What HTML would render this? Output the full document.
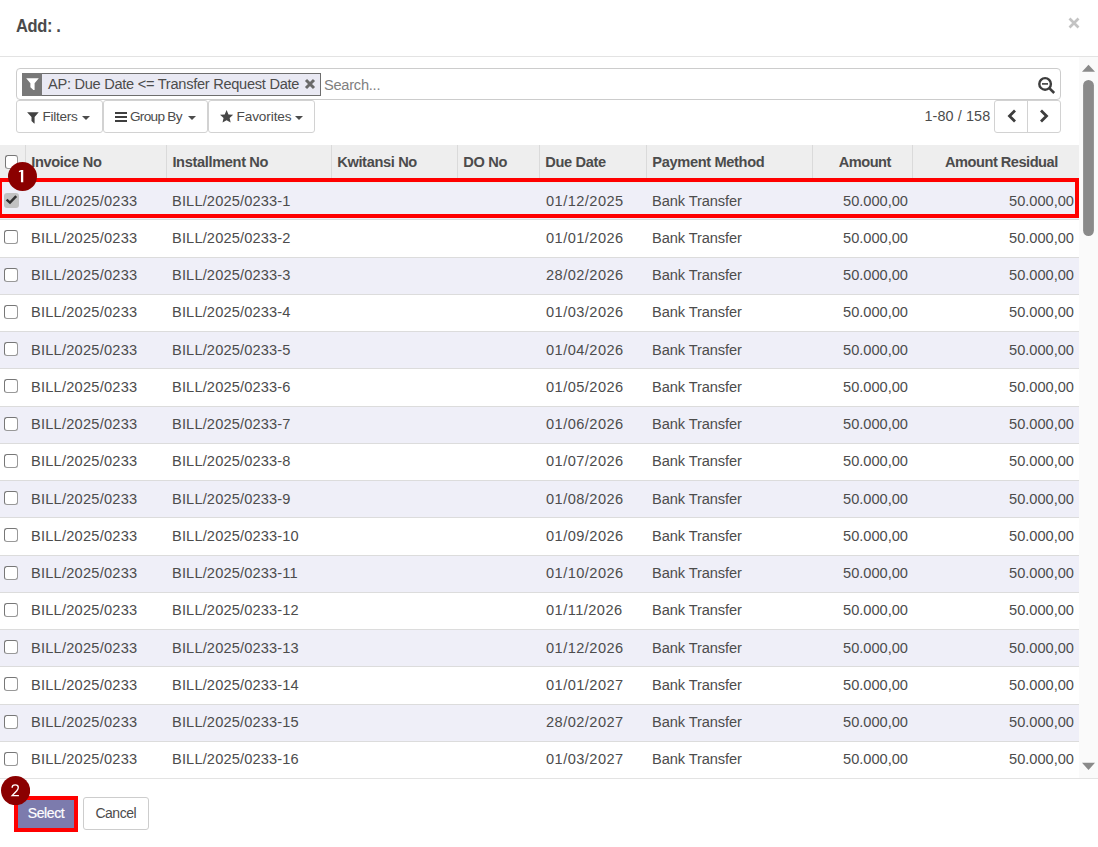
<!DOCTYPE html><html><head><meta charset="utf-8"><style>
*{box-sizing:border-box;margin:0;padding:0}
html,body{width:1098px;height:847px;overflow:hidden;background:#fff}
body{position:relative;font-family:"Liberation Sans",sans-serif;color:#4c4c4c}
.a{position:absolute;white-space:nowrap}
.t{font-size:14.625px;line-height:16px}
.hd{font-weight:bold}
.ln{position:absolute;left:0;height:1px;background:#dcdcdc}
.vl{position:absolute;width:1px;background:#dadada}
.cb{position:absolute;width:14px;height:14px;border:1px solid #777;border-right-color:#999;border-bottom-color:#999;border-radius:3px;background:#fff}
.btn{position:absolute;border:1px solid #d2d2d2;border-radius:3px;background:#fff}
.badge{position:absolute;border-radius:50%;background:#800000;color:#fff;font-size:19px;text-align:center}
</style></head><body>
<div class="a" style="left:16px;top:15px;font-size:18.3px;font-weight:bold;line-height:21px;letter-spacing:-0.4px;color:#4b4b4b;transform:scaleX(0.9);transform-origin:0 0">Add: .</div>
<svg class="a" style="left:1068.4px;top:17.2px" width="12" height="12" viewBox="0 0 12 12"><path d="M1.5 1.5L10.5 10.5M10.5 1.5L1.5 10.5" stroke="#c3c3c3" stroke-width="2.7"/></svg>
<div class="a" style="left:0;top:56px;width:1098px;height:1px;background:#e3e3e3"></div>
<div class="a" style="left:1079px;top:57px;width:19px;height:721px;background:#fafafa"></div>
<svg class="a" style="left:1079px;top:57px" width="19" height="721" viewBox="0 0 19 721"><path d="M3 14.8L9.5 7.7L16 14.8Z" fill="#8a8a8a"/><rect x="4.1" y="23" width="10.8" height="156" rx="5.4" fill="#8a8a8a"/><path d="M3 705.8L16 705.8L9.5 713Z" fill="#8a8a8a"/></svg>
<div class="a" style="left:16px;top:68px;width:1045px;height:32px;border:1px solid #cccccc;border-radius:4px"></div>
<div class="a" style="left:22px;top:73px;width:299px;height:23px;border:1px solid #6e6e6e;background:#e9e9f3"></div>
<div class="a" style="left:22px;top:73px;width:20px;height:23px;background:#787878"></div>
<svg class="a" style="left:26px;top:78px" width="13" height="12" viewBox="0 0 13 12"><path d="M0.2 0.2H12.8L8.6 5.2V12H7.4L4.4 9.3V5.2Z" fill="#fff"/></svg>
<div class="a t" style="left:48px;top:76px;letter-spacing:-0.28px">AP: Due Date &lt;= Transfer Request Date</div>
<svg class="a" style="left:304px;top:78px" width="12" height="12" viewBox="0 0 12 12"><path d="M2 2L10 10M10 2L2 10" stroke="#6a6a6a" stroke-width="3"/></svg>
<div class="a t" style="left:324px;top:76.7px;color:#808080;letter-spacing:-0.25px">Search...</div>
<svg class="a" style="left:1036px;top:75px" width="22" height="22" viewBox="0 0 22 22"><circle cx="9.1" cy="8.9" r="5.8" fill="none" stroke="#3d3d3d" stroke-width="2.4"/><path d="M6 8.9H12" stroke="#3d3d3d" stroke-width="1.6"/><path d="M13.3 13.1L18.2 18" stroke="#3d3d3d" stroke-width="2.6" stroke-linecap="butt"/></svg>
<div class="btn" style="left:16px;top:100px;width:87px;height:33px"></div>
<svg class="a" style="left:27.4px;top:111.5px" width="12" height="12" viewBox="0 0 12 12"><path d="M0.1 0.3H11.7L7.6 4.9V11.4H7.1L4.5 9.1V4.9Z" fill="#424242"/></svg>
<div class="a" style="left:42.5px;top:109px;font-size:13.6px;line-height:16px;letter-spacing:-0.3px">Filters</div>
<svg class="a" style="left:82.0px;top:116.0px" width="8" height="4" viewBox="0 0 8 4"><path d="M0 0H8L4 4Z" fill="#4c4c4c"/></svg>
<div class="btn" style="left:103px;top:100px;width:105px;height:33px"></div>
<svg class="a" style="left:115px;top:112px" width="12" height="10" viewBox="0 0 12 10"><path d="M0 0H12V2H0ZM0 4H12V6H0ZM0 8H12V10H0Z" fill="#3f3f3f"/></svg>
<div class="a" style="left:130px;top:109px;font-size:13.6px;line-height:16px;letter-spacing:-0.7px">Group By</div>
<svg class="a" style="left:188.0px;top:116.0px" width="8" height="4" viewBox="0 0 8 4"><path d="M0 0H8L4 4Z" fill="#4c4c4c"/></svg>
<div class="btn" style="left:208px;top:100px;width:107px;height:33px"></div>
<svg class="a" style="left:220.3px;top:110.3px" width="14" height="14" viewBox="0 0 14 14"><path d="M6.60 0.10L8.48 4.41L13.16 4.87L9.64 7.99L10.66 12.58L6.60 10.20L2.54 12.58L3.56 7.99L0.04 4.87L4.72 4.41Z" fill="#474747"/></svg>
<div class="a" style="left:236.5px;top:109px;font-size:13.6px;line-height:16px;letter-spacing:-0.1px">Favorites</div>
<svg class="a" style="left:295.0px;top:116.0px" width="8" height="4" viewBox="0 0 8 4"><path d="M0 0H8L4 4Z" fill="#4c4c4c"/></svg>
<div class="a" style="left:924.5px;top:108px;font-size:14.4px;line-height:16px;letter-spacing:0.1px">1-80 / 158</div>
<div class="btn" style="left:994px;top:100px;width:67px;height:33px"></div>
<div class="a" style="left:1027px;top:101px;width:1px;height:31px;background:#d2d2d2"></div>
<svg class="a" style="left:1006px;top:109px" width="12" height="14" viewBox="0 0 12 14"><path d="M9 1.5L3.5 7L9 12.5" fill="none" stroke="#3d3d3d" stroke-width="2.8"/></svg>
<svg class="a" style="left:1038px;top:109px" width="12" height="14" viewBox="0 0 12 14"><path d="M3 1.5L8.5 7L3 12.5" fill="none" stroke="#3d3d3d" stroke-width="2.8"/></svg>
<div class="a" style="left:0;top:145px;width:1079px;height:38px;background:#eeeeee"></div>
<div class="vl" style="left:25px;top:145.00px;height:37.27px"></div>
<div class="vl" style="left:166px;top:145.00px;height:37.27px"></div>
<div class="vl" style="left:331px;top:145.00px;height:37.27px"></div>
<div class="vl" style="left:457px;top:145.00px;height:37.27px"></div>
<div class="vl" style="left:539px;top:145.00px;height:37.27px"></div>
<div class="vl" style="left:646px;top:145.00px;height:37.27px"></div>
<div class="vl" style="left:812px;top:145.00px;height:37.27px"></div>
<div class="vl" style="left:912px;top:145.00px;height:37.27px"></div>
<div class="cb" style="left:4.8px;top:155px;width:13.5px;height:13.5px"></div>
<div class="a t hd" style="left:31.2px;top:154.00px;letter-spacing:-0.35px">Invoice No</div>
<div class="a t hd" style="left:172.4px;top:154.00px;letter-spacing:-0.35px">Installment No</div>
<div class="a t hd" style="left:337.2px;top:154.00px;letter-spacing:-0.35px">Kwitansi No</div>
<div class="a t hd" style="left:463.3px;top:154.00px;letter-spacing:-0.35px">DO No</div>
<div class="a t hd" style="left:545.3px;top:154.00px;letter-spacing:-0.35px">Due Date</div>
<div class="a t hd" style="left:652.3px;top:154.00px;letter-spacing:-0.35px">Payment Method</div>
<div class="a t hd" style="right:207.3px;top:154.00px;letter-spacing:-0.55px">Amount</div>
<div class="a t hd" style="right:40.3px;top:154.00px;letter-spacing:-0.5px">Amount Residual</div>
<div class="a" style="left:0;top:183px;width:1079px;height:36px;background:#efeff8"></div>
<div class="a" style="left:0;top:220px;width:1079px;height:37px;background:#ffffff"></div>
<div class="a" style="left:0;top:258px;width:1079px;height:36px;background:#efeff8"></div>
<div class="a" style="left:0;top:295px;width:1079px;height:36px;background:#ffffff"></div>
<div class="a" style="left:0;top:332px;width:1079px;height:36px;background:#efeff8"></div>
<div class="a" style="left:0;top:369px;width:1079px;height:37px;background:#ffffff"></div>
<div class="a" style="left:0;top:407px;width:1079px;height:36px;background:#efeff8"></div>
<div class="a" style="left:0;top:444px;width:1079px;height:36px;background:#ffffff"></div>
<div class="a" style="left:0;top:481px;width:1079px;height:36px;background:#efeff8"></div>
<div class="a" style="left:0;top:518px;width:1079px;height:37px;background:#ffffff"></div>
<div class="a" style="left:0;top:556px;width:1079px;height:36px;background:#efeff8"></div>
<div class="a" style="left:0;top:593px;width:1079px;height:36px;background:#ffffff"></div>
<div class="a" style="left:0;top:630px;width:1079px;height:36px;background:#efeff8"></div>
<div class="a" style="left:0;top:667px;width:1079px;height:37px;background:#ffffff"></div>
<div class="a" style="left:0;top:705px;width:1079px;height:36px;background:#efeff8"></div>
<div class="a" style="left:0;top:742px;width:1079px;height:36px;background:#ffffff"></div>
<div class="ln" style="top:219px;width:1079px"></div>
<div class="ln" style="top:257px;width:1079px"></div>
<div class="ln" style="top:294px;width:1079px"></div>
<div class="ln" style="top:331px;width:1079px"></div>
<div class="ln" style="top:368px;width:1079px"></div>
<div class="ln" style="top:406px;width:1079px"></div>
<div class="ln" style="top:443px;width:1079px"></div>
<div class="ln" style="top:480px;width:1079px"></div>
<div class="ln" style="top:517px;width:1079px"></div>
<div class="ln" style="top:555px;width:1079px"></div>
<div class="ln" style="top:592px;width:1079px"></div>
<div class="ln" style="top:629px;width:1079px"></div>
<div class="ln" style="top:666px;width:1079px"></div>
<div class="ln" style="top:704px;width:1079px"></div>
<div class="ln" style="top:741px;width:1079px"></div>
<div class="ln" style="top:778px;width:1079px"></div>
<div class="a" style="left:4px;top:193px;width:14.5px;height:14.5px;border-radius:3px;background:#c2c2c2"></div>
<svg class="a" style="left:4px;top:193px" width="15" height="15" viewBox="0 0 15 15"><path d="M2.6 6.6L6 9.6L12.2 3.2" fill="none" stroke="#333" stroke-width="2.5"/></svg>
<div class="a t" style="left:31px;top:192.70px;letter-spacing:0.23px">BILL/2025/0233</div>
<div class="a t" style="left:172px;top:192.70px;letter-spacing:0.15px">BILL/2025/0233-1</div>
<div class="a t" style="left:546px;top:192.70px;letter-spacing:0.45px">01/12/2025</div>
<div class="a t" style="left:652px;top:192.70px;letter-spacing:-0.08px">Bank Transfer</div>
<div class="a t" style="right:190.0px;top:192.70px">50.000,00</div>
<div class="a t" style="right:24.0px;top:192.70px">50.000,00</div>
<div class="cb" style="left:4.3px;top:229.7px"></div>
<div class="a t" style="left:31px;top:229.95px;letter-spacing:0.23px">BILL/2025/0233</div>
<div class="a t" style="left:172px;top:229.95px;letter-spacing:0.15px">BILL/2025/0233-2</div>
<div class="a t" style="left:546px;top:229.95px;letter-spacing:0.45px">01/01/2026</div>
<div class="a t" style="left:652px;top:229.95px;letter-spacing:-0.08px">Bank Transfer</div>
<div class="a t" style="right:190.0px;top:229.95px">50.000,00</div>
<div class="a t" style="right:24.0px;top:229.95px">50.000,00</div>
<div class="cb" style="left:4.3px;top:267.7px"></div>
<div class="a t" style="left:31px;top:267.20px;letter-spacing:0.23px">BILL/2025/0233</div>
<div class="a t" style="left:172px;top:267.20px;letter-spacing:0.15px">BILL/2025/0233-3</div>
<div class="a t" style="left:546px;top:267.20px;letter-spacing:0.45px">28/02/2026</div>
<div class="a t" style="left:652px;top:267.20px;letter-spacing:-0.08px">Bank Transfer</div>
<div class="a t" style="right:190.0px;top:267.20px">50.000,00</div>
<div class="a t" style="right:24.0px;top:267.20px">50.000,00</div>
<div class="cb" style="left:4.3px;top:304.7px"></div>
<div class="a t" style="left:31px;top:304.45px;letter-spacing:0.23px">BILL/2025/0233</div>
<div class="a t" style="left:172px;top:304.45px;letter-spacing:0.15px">BILL/2025/0233-4</div>
<div class="a t" style="left:546px;top:304.45px;letter-spacing:0.45px">01/03/2026</div>
<div class="a t" style="left:652px;top:304.45px;letter-spacing:-0.08px">Bank Transfer</div>
<div class="a t" style="right:190.0px;top:304.45px">50.000,00</div>
<div class="a t" style="right:24.0px;top:304.45px">50.000,00</div>
<div class="cb" style="left:4.3px;top:341.7px"></div>
<div class="a t" style="left:31px;top:341.70px;letter-spacing:0.23px">BILL/2025/0233</div>
<div class="a t" style="left:172px;top:341.70px;letter-spacing:0.15px">BILL/2025/0233-5</div>
<div class="a t" style="left:546px;top:341.70px;letter-spacing:0.45px">01/04/2026</div>
<div class="a t" style="left:652px;top:341.70px;letter-spacing:-0.08px">Bank Transfer</div>
<div class="a t" style="right:190.0px;top:341.70px">50.000,00</div>
<div class="a t" style="right:24.0px;top:341.70px">50.000,00</div>
<div class="cb" style="left:4.3px;top:378.7px"></div>
<div class="a t" style="left:31px;top:378.95px;letter-spacing:0.23px">BILL/2025/0233</div>
<div class="a t" style="left:172px;top:378.95px;letter-spacing:0.15px">BILL/2025/0233-6</div>
<div class="a t" style="left:546px;top:378.95px;letter-spacing:0.45px">01/05/2026</div>
<div class="a t" style="left:652px;top:378.95px;letter-spacing:-0.08px">Bank Transfer</div>
<div class="a t" style="right:190.0px;top:378.95px">50.000,00</div>
<div class="a t" style="right:24.0px;top:378.95px">50.000,00</div>
<div class="cb" style="left:4.3px;top:416.7px"></div>
<div class="a t" style="left:31px;top:416.20px;letter-spacing:0.23px">BILL/2025/0233</div>
<div class="a t" style="left:172px;top:416.20px;letter-spacing:0.15px">BILL/2025/0233-7</div>
<div class="a t" style="left:546px;top:416.20px;letter-spacing:0.45px">01/06/2026</div>
<div class="a t" style="left:652px;top:416.20px;letter-spacing:-0.08px">Bank Transfer</div>
<div class="a t" style="right:190.0px;top:416.20px">50.000,00</div>
<div class="a t" style="right:24.0px;top:416.20px">50.000,00</div>
<div class="cb" style="left:4.3px;top:453.7px"></div>
<div class="a t" style="left:31px;top:453.45px;letter-spacing:0.23px">BILL/2025/0233</div>
<div class="a t" style="left:172px;top:453.45px;letter-spacing:0.15px">BILL/2025/0233-8</div>
<div class="a t" style="left:546px;top:453.45px;letter-spacing:0.45px">01/07/2026</div>
<div class="a t" style="left:652px;top:453.45px;letter-spacing:-0.08px">Bank Transfer</div>
<div class="a t" style="right:190.0px;top:453.45px">50.000,00</div>
<div class="a t" style="right:24.0px;top:453.45px">50.000,00</div>
<div class="cb" style="left:4.3px;top:490.7px"></div>
<div class="a t" style="left:31px;top:490.70px;letter-spacing:0.23px">BILL/2025/0233</div>
<div class="a t" style="left:172px;top:490.70px;letter-spacing:0.15px">BILL/2025/0233-9</div>
<div class="a t" style="left:546px;top:490.70px;letter-spacing:0.45px">01/08/2026</div>
<div class="a t" style="left:652px;top:490.70px;letter-spacing:-0.08px">Bank Transfer</div>
<div class="a t" style="right:190.0px;top:490.70px">50.000,00</div>
<div class="a t" style="right:24.0px;top:490.70px">50.000,00</div>
<div class="cb" style="left:4.3px;top:527.7px"></div>
<div class="a t" style="left:31px;top:527.95px;letter-spacing:0.23px">BILL/2025/0233</div>
<div class="a t" style="left:172px;top:527.95px;letter-spacing:0.15px">BILL/2025/0233-10</div>
<div class="a t" style="left:546px;top:527.95px;letter-spacing:0.45px">01/09/2026</div>
<div class="a t" style="left:652px;top:527.95px;letter-spacing:-0.08px">Bank Transfer</div>
<div class="a t" style="right:190.0px;top:527.95px">50.000,00</div>
<div class="a t" style="right:24.0px;top:527.95px">50.000,00</div>
<div class="cb" style="left:4.3px;top:565.7px"></div>
<div class="a t" style="left:31px;top:565.20px;letter-spacing:0.23px">BILL/2025/0233</div>
<div class="a t" style="left:172px;top:565.20px;letter-spacing:0.15px">BILL/2025/0233-11</div>
<div class="a t" style="left:546px;top:565.20px;letter-spacing:0.45px">01/10/2026</div>
<div class="a t" style="left:652px;top:565.20px;letter-spacing:-0.08px">Bank Transfer</div>
<div class="a t" style="right:190.0px;top:565.20px">50.000,00</div>
<div class="a t" style="right:24.0px;top:565.20px">50.000,00</div>
<div class="cb" style="left:4.3px;top:602.7px"></div>
<div class="a t" style="left:31px;top:602.45px;letter-spacing:0.23px">BILL/2025/0233</div>
<div class="a t" style="left:172px;top:602.45px;letter-spacing:0.15px">BILL/2025/0233-12</div>
<div class="a t" style="left:546px;top:602.45px;letter-spacing:0.45px">01/11/2026</div>
<div class="a t" style="left:652px;top:602.45px;letter-spacing:-0.08px">Bank Transfer</div>
<div class="a t" style="right:190.0px;top:602.45px">50.000,00</div>
<div class="a t" style="right:24.0px;top:602.45px">50.000,00</div>
<div class="cb" style="left:4.3px;top:639.7px"></div>
<div class="a t" style="left:31px;top:639.70px;letter-spacing:0.23px">BILL/2025/0233</div>
<div class="a t" style="left:172px;top:639.70px;letter-spacing:0.15px">BILL/2025/0233-13</div>
<div class="a t" style="left:546px;top:639.70px;letter-spacing:0.45px">01/12/2026</div>
<div class="a t" style="left:652px;top:639.70px;letter-spacing:-0.08px">Bank Transfer</div>
<div class="a t" style="right:190.0px;top:639.70px">50.000,00</div>
<div class="a t" style="right:24.0px;top:639.70px">50.000,00</div>
<div class="cb" style="left:4.3px;top:676.7px"></div>
<div class="a t" style="left:31px;top:676.95px;letter-spacing:0.23px">BILL/2025/0233</div>
<div class="a t" style="left:172px;top:676.95px;letter-spacing:0.15px">BILL/2025/0233-14</div>
<div class="a t" style="left:546px;top:676.95px;letter-spacing:0.45px">01/01/2027</div>
<div class="a t" style="left:652px;top:676.95px;letter-spacing:-0.08px">Bank Transfer</div>
<div class="a t" style="right:190.0px;top:676.95px">50.000,00</div>
<div class="a t" style="right:24.0px;top:676.95px">50.000,00</div>
<div class="cb" style="left:4.3px;top:714.7px"></div>
<div class="a t" style="left:31px;top:714.20px;letter-spacing:0.23px">BILL/2025/0233</div>
<div class="a t" style="left:172px;top:714.20px;letter-spacing:0.15px">BILL/2025/0233-15</div>
<div class="a t" style="left:546px;top:714.20px;letter-spacing:0.45px">28/02/2027</div>
<div class="a t" style="left:652px;top:714.20px;letter-spacing:-0.08px">Bank Transfer</div>
<div class="a t" style="right:190.0px;top:714.20px">50.000,00</div>
<div class="a t" style="right:24.0px;top:714.20px">50.000,00</div>
<div class="cb" style="left:4.3px;top:751.7px"></div>
<div class="a t" style="left:31px;top:751.45px;letter-spacing:0.23px">BILL/2025/0233</div>
<div class="a t" style="left:172px;top:751.45px;letter-spacing:0.15px">BILL/2025/0233-16</div>
<div class="a t" style="left:546px;top:751.45px;letter-spacing:0.45px">01/03/2027</div>
<div class="a t" style="left:652px;top:751.45px;letter-spacing:-0.08px">Bank Transfer</div>
<div class="a t" style="right:190.0px;top:751.45px">50.000,00</div>
<div class="a t" style="right:24.0px;top:751.45px">50.000,00</div>
<div class="a" style="left:-2px;top:178px;width:1081px;height:40px;border:4px solid #ff0000"></div>
<svg class="a" style="left:8px;top:161.8px" width="29" height="29" viewBox="0 0 29 29"><circle cx="14.5" cy="14.5" r="14.5" fill="#8b0000"/><path d="M13.0 8H15.25V20.2H12.95V9.75L10.9 10.2V9.0Z" fill="#fff"/></svg>
<div class="a" style="left:0;top:778px;width:1098px;height:69px;background:#fff"></div>
<div class="a" style="left:0;top:778px;width:1098px;height:1px;background:#e3e3e3"></div>
<div class="a" style="left:14px;top:796px;width:64px;height:36px;border:4px solid #ff0000;background:#7c7bad"></div>
<div class="a" style="left:14px;top:805px;width:64px;text-align:center;color:#fff;font-size:14px;-webkit-text-stroke:0.2px #fff;line-height:16px;letter-spacing:-0.4px">Select</div>
<div class="btn" style="left:83px;top:797px;width:65.5px;height:32.5px;border-color:#cdcdcd"></div>
<div class="a" style="left:83px;top:805px;width:65.5px;text-align:center;font-size:14px;line-height:16px;letter-spacing:-0.5px">Cancel</div>
<svg class="a" style="left:0.9px;top:775.7px" width="29.2" height="29.2" viewBox="0 0 29.2 29.2"><circle cx="14.6" cy="14.6" r="14.6" fill="#8b0000"/><path d="M11.1 11.7C11.1 9.9 12.4 8.95 14.2 8.95C16 8.95 17.3 10 17.3 11.6C17.3 12.9 16.7 13.7 15.8 14.7L11.2 19.65H17.9" fill="none" stroke="#fff" stroke-width="1.35"/></svg>
</body></html>
